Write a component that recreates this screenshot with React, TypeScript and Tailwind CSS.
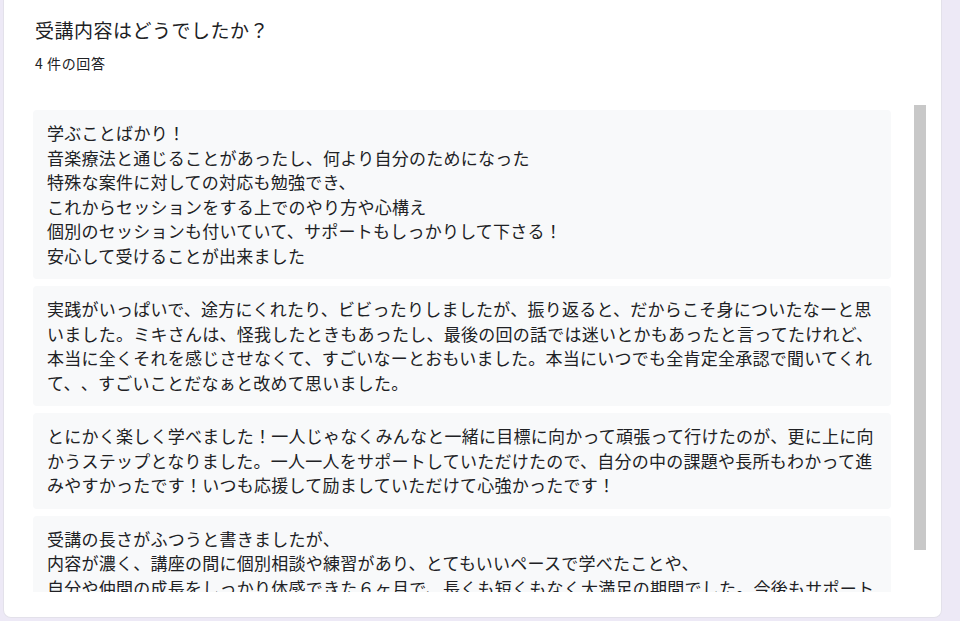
import React from 'react';

const ANSWERS: string[] = [
  '学ぶことばかり！\n音楽療法と通じることがあったし、何より自分のためになった\n特殊な案件に対しての対応も勉強でき、\nこれからセッションをする上でのやり方や心構え\n個別のセッションも付いていて、サポートもしっかりして下さる！\n安心して受けることが出来ました',
  '実践がいっぱいで、途方にくれたり、ビビったりしましたが、振り返ると、だからこそ身についたなーと思いました。ミキさんは、怪我したときもあったし、最後の回の話では迷いとかもあったと言ってたけれど、本当に全くそれを感じさせなくて、すごいなーとおもいました。本当にいつでも全肯定全承認で聞いてくれて、、すごいことだなぁと改めて思いました。',
  'とにかく楽しく学べました！一人じゃなくみんなと一緒に目標に向かって頑張って行けたのが、更に上に向かうステップとなりました。一人一人をサポートしていただけたので、自分の中の課題や長所もわかって進みやすかったです！いつも応援して励ましていただけて心強かったです！',
  '受講の長さがふつうと書きましたが、\n内容が濃く、講座の間に個別相談や練習があり、とてもいいペースで学べたことや、\n自分や仲間の成長をしっかり体感できた６ヶ月で、長くも短くもなく大満足の期間でした。今後もサポートしていただけるとのことで、とても心強いです。',
];

const App: React.FC = () => {
  return (
    <div className="h-[621px] w-[960px] overflow-hidden bg-[#ede9f6] flex pl-[3px] pr-[18px] pb-[3px] font-['Noto_Sans_CJK_JP','Noto_Sans',sans-serif] text-[#202124] [text-spacing-trim:space-all]">
      {/* Question card (top is scrolled off) */}
      <div className="flex-1 flex flex-col bg-white rounded-b-lg border border-t-0 border-[#e3e1ea]">
        <div className="pl-[31px] pt-[16px]">
          <h2 className="text-[19px] leading-[28px] tracking-[0.5px]">受講内容はどうでしたか？</h2>
          <p className="mt-[9px] text-[14px] leading-[20px] tracking-[0.6px]">4 件の回答</p>
        </div>

        {/* Answers list with scrollbar */}
        <div className="mt-[32px] h-[487px] flex pl-[29px] pr-[14px]">
          <div className="w-[858px] overflow-hidden flex flex-col gap-[7px] pt-[5px]">
            {ANSWERS.map((text, i) => (
              <div
                key={i}
                className="shrink-0 rounded-[4px] bg-[#f8f9fa] px-[14px] py-[11px] text-[17px] leading-[24.5px] tracking-[0.25px] whitespace-pre-line"
              >
                {text}
              </div>
            ))}
          </div>
          <div className="ml-[23px] w-[12px]">
            <div className="h-[445px] bg-[#c8c8c8]" />
          </div>
        </div>
      </div>
    </div>
  );
};

export default App;
